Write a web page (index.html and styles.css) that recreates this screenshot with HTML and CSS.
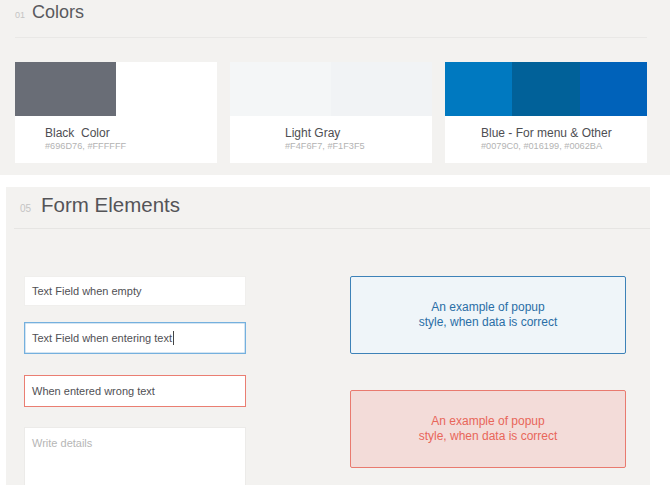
FILE: index.html
```html
<!DOCTYPE html>
<html>
<head>
<meta charset="utf-8">
<link rel="stylesheet" href="styles.css">
</head>
<body>
<section class="panel colors">
  <header class="head">
    <span class="num">01</span><span class="title">Colors</span>
  </header>
  <div class="cards">
    <div class="card">
      <div class="swatches">
        <div class="sw sw-black"></div>
        <div class="sw sw-white"></div>
      </div>
      <div class="info info-1">
        <div class="name">Black&nbsp; Color</div>
        <div class="hex">#696D76, #FFFFFF</div>
      </div>
    </div>
    <div class="card">
      <div class="swatches">
        <div class="sw sw-gray1"></div>
        <div class="sw sw-gray2"></div>
      </div>
      <div class="info info-2">
        <div class="name">Light Gray</div>
        <div class="hex">#F4F6F7, #F1F3F5</div>
      </div>
    </div>
    <div class="card">
      <div class="swatches">
        <div class="sw sw-blue1"></div>
        <div class="sw sw-blue2"></div>
        <div class="sw sw-blue3"></div>
      </div>
      <div class="info info-3">
        <div class="name">Blue - For menu &amp; Other</div>
        <div class="hex">#0079C0, #016199, #0062BA</div>
      </div>
    </div>
  </div>
</section>

<section class="panel forms">
  <header class="fhead">
    <span class="fnum">05</span><span class="ftitle">Form Elements</span>
  </header>
  <div class="fbody">
    <div class="fields">
      <div class="field field-empty">Text Field when empty</div>
      <div class="field field-focus">Text Field when entering text<span class="caret"></span></div>
      <div class="field field-error">When entered wrong text</div>
      <div class="field field-area">Write details</div>
    </div>
    <div class="popups">
      <div class="popup popup-ok">An example of popup<br>style, when data is correct</div>
      <div class="popup popup-err">An example of popup<br>style, when data is correct</div>
    </div>
  </div>
</section>
</body>
</html>
```

FILE: styles.css
```css
html, body {
  margin: 0;
  padding: 0;
  background: #ffffff;
}
body {
  font-family: "Liberation Sans", Arial, sans-serif;
  width: 670px;
  height: 485px;
  overflow: hidden;
}
.panel {
  background: #f3f2f0;
  box-sizing: border-box;
}
.colors {
  height: 175px;
  padding: 0 23px 0 15px;
}
.head {
  height: 38px;
  box-sizing: border-box;
  border-bottom: 1px solid #e9e8e6;
  display: flex;
  align-items: baseline;
  padding-top: 1px;
  line-height: 22px;
}
.num {
  font-size: 9px;
  color: #c4c4c4;
  width: 17px;
}
.title {
  font-size: 18px;
  color: #5a5a5e;
}
.cards {
  display: flex;
  gap: 13px;
  margin-top: 24px;
}
.card {
  width: 202px;
  height: 101px;
  background: #ffffff;
  display: flex;
  flex-direction: column;
}
.swatches {
  display: flex;
  height: 54px;
}
.sw { flex: 1; }
.sw-black { background: #696d76; }
.sw-white { background: #ffffff; }
.sw-gray1 { background: #f4f6f7; }
.sw-gray2 { background: #f1f3f5; }
.sw-blue1 { background: #0079c0; }
.sw-blue2 { background: #016199; }
.sw-blue3 { background: #0062ba; }
.info {
  padding-top: 10px;
}
.info-1 { padding-left: 30px; }
.info-2 { padding-left: 55px; }
.info-3 { padding-left: 36px; }
.name {
  font-size: 12px;
  line-height: 14px;
  color: #4e4e52;
}
.hex {
  font-size: 9.2px;
  line-height: 12px;
  color: #b3b3b3;
}

.forms {
  margin: 12px 0 0 6px;
  width: 644px;
  height: 298px;
  overflow: hidden;
}
.fhead {
  margin-left: 8px;
  height: 42px;
  box-sizing: border-box;
  border-bottom: 1px solid #e6e5e3;
  display: flex;
  align-items: baseline;
  padding: 6px 0 0 6px;
  line-height: 24px;
}
.fnum {
  font-size: 10px;
  color: #c4c4c4;
  width: 21px;
}
.ftitle {
  font-size: 20.5px;
  color: #545458;
}
.fbody {
  display: flex;
  gap: 104px;
  padding: 47px 0 0 18px;
}
.fields {
  width: 222px;
  display: flex;
  flex-direction: column;
}
.field {
  box-sizing: border-box;
  background: #ffffff;
  font-size: 11px;
  color: #505054;
  padding-left: 7px;
  display: flex;
  align-items: center;
  border: 1px solid #f3f2f0;
}
.field-empty {
  height: 30px;
  border-color: #f0efed;
}
.field-focus {
  height: 32px;
  margin-top: 16px;
  border: 1px solid #74b0de;
  box-shadow: inset 0 0 0 0.5px #a9cbe6;
}
.field-error {
  height: 32px;
  margin-top: 21px;
  border: 1px solid #ea7e72;
}
.field-area {
  height: 80px;
  margin-top: 20px;
  align-items: flex-start;
  padding-top: 9px;
  color: #b6b6b6;
  border-color: #ecebe9;
}
.caret {
  display: inline-block;
  width: 1px;
  height: 14px;
  background: #444;
  margin-left: 1px;
}
.popups {
  width: 276px;
  display: flex;
  flex-direction: column;
  gap: 36px;
}
.popup {
  box-sizing: border-box;
  height: 78px;
  border-radius: 2px;
  display: flex;
  align-items: center;
  justify-content: center;
  text-align: center;
  font-size: 12px;
  line-height: 15px;
}
.popup-ok {
  background: #eff5f9;
  border: 1px solid #3d82b8;
  color: #2a6ea6;
}
.popup-err {
  background: #f3dcd9;
  border: 1px solid #e97a6f;
  color: #e8665a;
}
```
